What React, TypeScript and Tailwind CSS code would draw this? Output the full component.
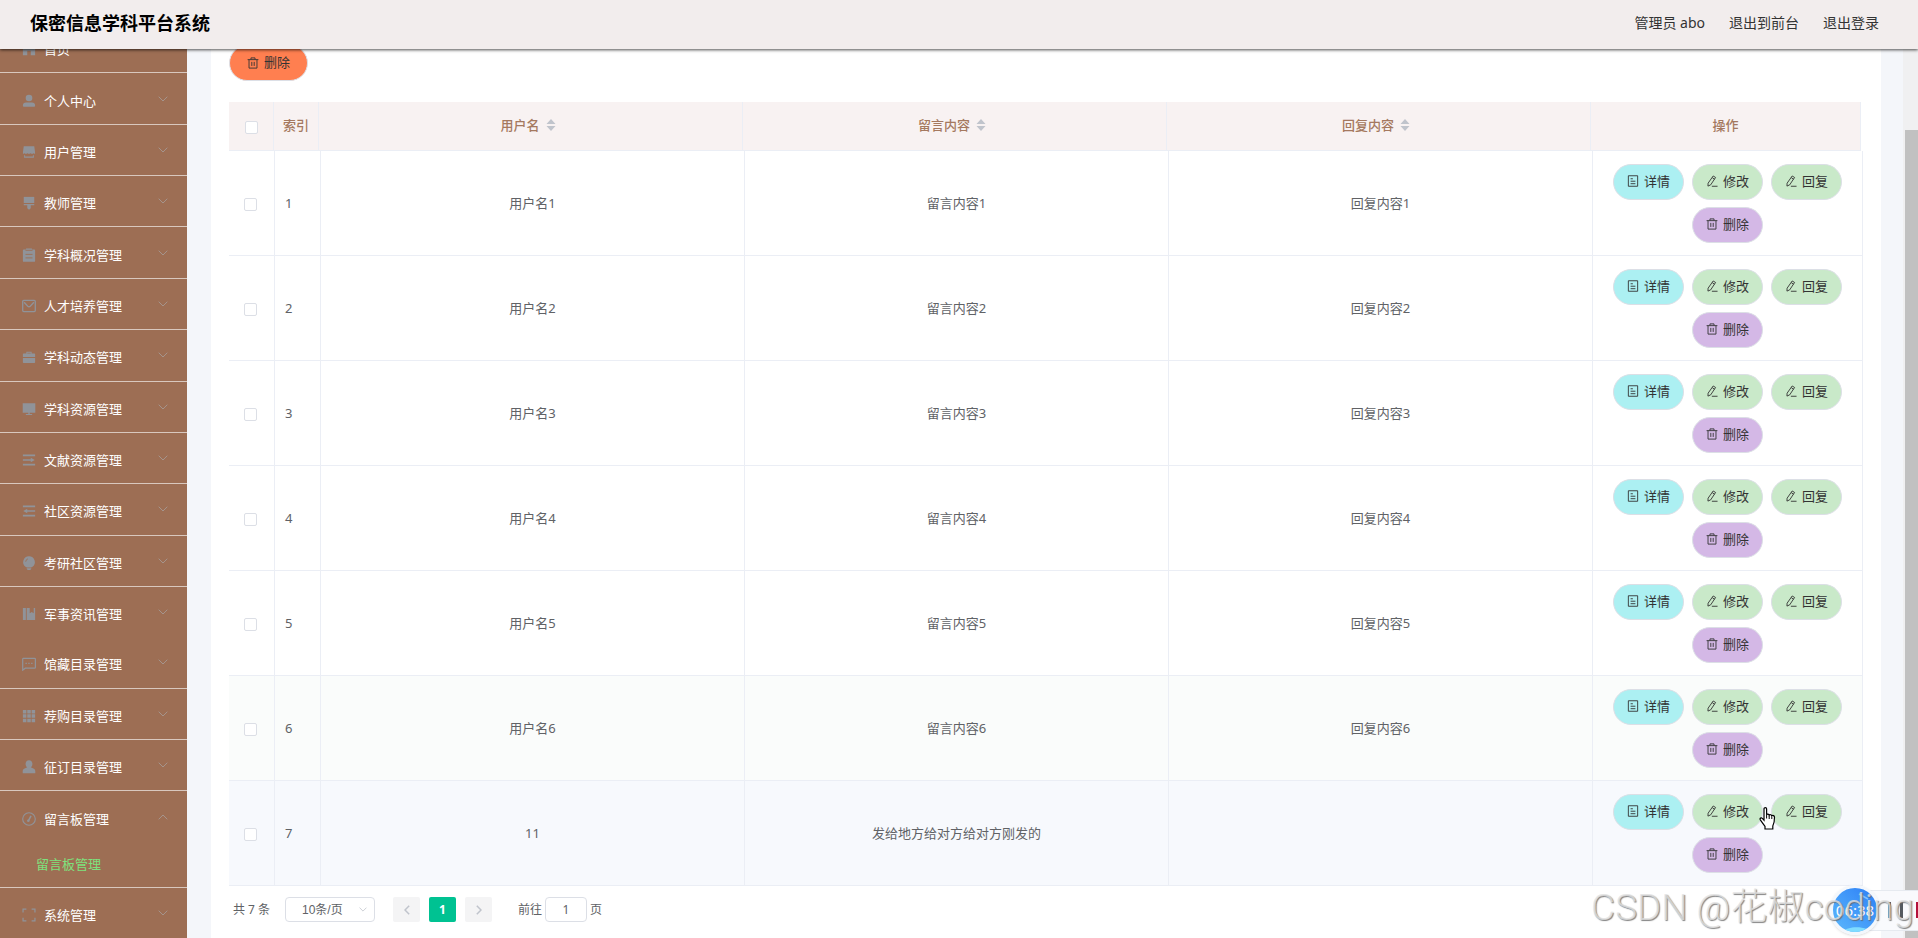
import type { ReactNode } from "react";

const iconPaths: Record<string, ReactNode> = {
  home: (
    <path fill="currentColor" d="M8 1 1 6.6V15h5v-5h4v5h5V6.6z" />
  ),
  person: (
    <g fill="currentColor">
      <circle cx="8" cy="4.6" r="3.8" />
      <path d="M1 13.2c0-2.4 1.3-3.6 3.6-3.6h6.8c2.3 0 3.6 1.2 3.6 3.6 0 .9-.5 1.5-1.4 1.5H2.4c-.9 0-1.4-.6-1.4-1.5z" />
    </g>
  ),
  users: (
    <g fill="currentColor">
      <path d="M2 1.4h12l.9 6.6v2.4l-1.7-.9-1.7.9-1.8-.9-1.7.9-1.7-.9-1.8.9-1.7-.9-1.7.9V8z" />
      <path d="M2.4 11.6h1.2v1.6h8.8v-1.6h1.2v3H2.4z" />
    </g>
  ),
  brush: (
    <g fill="currentColor">
      <path d="M2 1h12v7H2z" />
      <path d="M2 9h12v1.6H10V14l-2 1.6L6 14v-3.4H2z" />
    </g>
  ),
  clipboard: (
    <g>
      <path fill="currentColor" d="M4.6 1.8V.6h6.8v1.2H14c.7 0 1 .4 1 1v12c0 .6-.4 1-1 1H2c-.6 0-1-.4-1-1v-12c0-.6.3-1 1-1z" />
      <path stroke="#9d6e54" d="M4 2.6h8M4 7.3h8M4 11.3h8" />
    </g>
  ),
  mail: (
    <g fill="none" stroke="currentColor" strokeWidth="1.5">
      <rect x=".8" y="1.6" width="14.4" height="12.8" rx="1.2" />
      <path d="M2.4 3.8 6.6 8.2c.9.8 1.9.8 2.8 0l4.2-4.4" />
    </g>
  ),
  briefcase: (
    <g fill="currentColor">
      <path d="M5 4V2h6v2h3.2c.5 0 .8.3.8.8V8H1V4.8c0-.5.3-.8.8-.8zm1.1 0h3.8V3H6.1z" />
      <path d="M1 9h14v5c0 .5-.3.8-.8.8H1.8c-.5 0-.8-.3-.8-.8z" />
    </g>
  ),
  monitor: (
    <path fill="currentColor" d="M.8 1.4h14.4v11H.8zM7.2 12.4h1.6v1.4h2.8v1H4.4v-1h2.8z" />
  ),
  unfold: (
    <path fill="currentColor" d="M1 1.8h14v1.8H1zM1 7.1h9V5.4L14.6 8 10 10.6V8.9H1zM1 12.4h14v1.8H1z" />
  ),
  fold: (
    <path fill="currentColor" d="M1 1.8h14v1.8H1zM15 7.1H6V5.4L1.4 8 6 10.6V8.9h9zM1 12.4h14v1.8H1z" />
  ),
  bulb: (
    <g>
      <path fill="currentColor" d="M8 .4a6.6 6.6 0 0 0-4 11.9l1.7.9h4.6l1.7-.9A6.6 6.6 0 0 0 8 .4zM5.4 14h5.2v.8L9.4 16H6.6l-1.2-1.2z" />
      <path fill="none" stroke="#9d6e54" strokeWidth=".9" d="M4.2 6.6a3.8 3.8 0 0 1 2.6-3.4" />
    </g>
  ),
  book: (
    <path fill="currentColor" d="M1 1.2h3.4v13.6H1zM5.4 1.2h3.4v6l2.3-1.5 2.3 1.5v-6H15v13.600H5.4z" />
  ),
  chat: (
    <g fill="none" stroke="currentColor" strokeWidth="1.4">
      <path d="M1.6 1.6h12.8c.5 0 .9.3.9.9v9.4c0 .6-.4.9-.9.9H3.700L.8 15V2.5c0-.6.3-.9.8-.9z" />
      <path strokeWidth="1.6" d="M4 7.3h1.5M7.2 7.3h1.5M10.5 7.3H12" />
    </g>
  ),
  grid: (
    <path fill="currentColor" d="M1 1h4v4H1zM6 1h4v4H6zM11 1h4v4h-4zM1 6h4v4H1zM6 6h4v4H6zM11 6h4v4h-4zM1 11h4v4H1zM6 11h4v4H6zM11 11h4v4h-4z" />
  ),
  agent: (
    <path fill="currentColor" d="M8 .4c2.4 0 3.9 1.7 3.9 4.1 0 1.7-.7 3.1-1.9 3.9l3.6 1.6c1.100.5 1.6 1.6 1.6 3v2H.8v-2c0-1.4.5-2.5 1.6-3L6 8.4C4.8 7.6 4.1 6.2 4.1 4.5 4.1 2.1 5.6.4 8 .4z" />
  ),
  gauge: (
    <g fill="none" stroke="currentColor" strokeWidth="1.3">
      <circle cx="8" cy="8" r="7.2" />
      <path strokeWidth="1.8" d="M7.3 10.2 10.3 4.5" />
      <circle cx="7.2" cy="10" r=".8" />
    </g>
  ),
  expand: (
    <path fill="none" stroke="currentColor" strokeWidth="1.4" d="M1.2 5V1.2H5M11 1.2h3.8V5M14.8 11v3.8H11M5 14.8H1.2V11" />
  ),
  trash: (
    <path fill="none" stroke="currentColor" strokeWidth="1.2" d="M.8 3.5h14.4M5.3 3.2V1.2h5.4v2M2.7 3.8v11h10.6v-11M6.4 6.5v5.4M9.6 6.5v5.4" />
  ),
  document: (
    <path fill="none" stroke="currentColor" strokeWidth="1.2" d="M1.800 1h12.400v14H1.800zM4.800 5h3M4.800 8.300h6.400M4.800 11.600h6.400" />
  ),
  edit: (
    <path fill="none" stroke="currentColor" strokeWidth="1.2" d="M9.600 1.300 12.800 3.300 6.200 13.200 2.600 14.800 2.800 10.900zM8.300 3.500l3.100 2.100M7.800 15h7.600" />
  ),
};

function Icon({ name, className }: { name: string; className: string }) {
  return (
    <svg viewBox="0 0 16 16" className={className} aria-hidden="true">
      {iconPaths[name]}
    </svg>
  );
}

function Chevron({ className }: { className: string }) {
  return (
    <svg viewBox="0 0 10 6" className={className} fill="none" stroke="currentColor" aria-hidden="true">
      <path d="M.7.7 5 5 9.3.7" />
    </svg>
  );
}

const menu = [
  { icon: "home", label: "首页", leaf: true },
  { icon: "person", label: "个人中心" },
  { icon: "users", label: "用户管理" },
  { icon: "brush", label: "教师管理" },
  { icon: "clipboard", label: "学科概况管理" },
  { icon: "mail", label: "人才培养管理" },
  { icon: "briefcase", label: "学科动态管理" },
  { icon: "monitor", label: "学科资源管理" },
  { icon: "unfold", label: "文献资源管理" },
  { icon: "fold", label: "社区资源管理" },
  { icon: "bulb", label: "考研社区管理" },
  { icon: "book", label: "军事资讯管理", plain: true },
  { icon: "chat", label: "馆藏目录管理" },
  { icon: "grid", label: "荐购目录管理" },
  { icon: "agent", label: "征订目录管理" },
  { icon: "gauge", label: "留言板管理", plain: true, child: "留言板管理" },
  { icon: "expand", label: "系统管理" },
];

function Sidebar() {
  return (
    <aside className="flex w-[187px] shrink-0 flex-col overflow-hidden bg-[#9d6e54]">
      <nav className="-mt-[27px] -mb-px flex grow flex-col text-[13px] text-white">
        {menu.map((item) => (
          <div key={item.label} className="contents">
            <a
              href="#"
              className={
                "flex min-h-12 flex-1 items-center pl-[22px] pr-[19px] pt-1 " +
                (item.plain ? "" : "border-b border-[#d9c8be]")
              }
            >
              <Icon name={item.icon} className="mr-2 size-[14px] text-[#909399]" />
              <span className="grow leading-5">{item.label}</span>
              {!item.leaf && (
                <Chevron
                  className={
                    item.child
                      ? "mb-1 h-[6px] w-[10px] rotate-180 text-[#a5948c]"
                      : "mb-1 h-[6px] w-[10px] text-[#a5948c]"
                  }
                />
              )}
            </a>
            {item.child && (
              <a
                href="#"
                className="flex h-[46px] shrink-0 items-center border-b border-[#d9c8be] pl-9 text-[#7de27d]"
              >
                {item.child}
              </a>
            )}
          </div>
        ))}
      </nav>
    </aside>
  );
}

const rows = [
  { id: 1, user: "用户名1", message: "留言内容1", reply: "回复内容1", tone: "bg-white" },
  { id: 2, user: "用户名2", message: "留言内容2", reply: "回复内容2", tone: "bg-white" },
  { id: 3, user: "用户名3", message: "留言内容3", reply: "回复内容3", tone: "bg-white" },
  { id: 4, user: "用户名4", message: "留言内容4", reply: "回复内容4", tone: "bg-white" },
  { id: 5, user: "用户名5", message: "留言内容5", reply: "回复内容5", tone: "bg-white" },
  { id: 6, user: "用户名6", message: "留言内容6", reply: "回复内容6", tone: "bg-[#fafcfb]" },
  { id: 7, user: "11", message: "发给地方给对方给对方刚发的", reply: "", tone: "bg-[#f7f9fd]" },
];

const actions = [
  { icon: "document", label: "详情", tone: "bg-[#acf0f2]" },
  { icon: "edit", label: "修改", tone: "bg-[#c9e9c9]" },
  { icon: "edit", label: "回复", tone: "bg-[#c9e9c9]" },
  { icon: "trash", label: "删除", tone: "bg-[#d4b8e6]" },
];

function Checkbox({ label }: { label: string }) {
  return (
    <input
      type="checkbox"
      aria-label={label}
      className="mt-[2px] block size-[13px] appearance-none rounded-xs border border-[#dcdfe6] bg-white"
    />
  );
}

function SortableHeading({ children }: { children: ReactNode }) {
  return (
    <th className="border-r border-b border-[#ebeef5] pr-[5px] pb-[2px] font-medium">
      <span className="flex items-center justify-center gap-[6px]">
        {children}
        <svg viewBox="0 0 10 14" className="h-[14px] w-[10px] fill-[#c0c4cc]" aria-hidden="true">
          <path d="M5 1 9.5 6h-9zM5 13 .5 8h9z" />
        </svg>
      </span>
    </th>
  );
}

function MessageTable() {
  return (
    <div className="text-[13px] leading-5">
      <div className="pr-[2px]">
        <table className="w-full table-fixed border-separate border-spacing-0 bg-[#f8f2f2] text-[#a5795f]">
          <colgroup>
            <col className="w-[45px]" />
            <col className="w-[45px]" />
            <col />
            <col />
            <col />
            <col className="w-[270px]" />
          </colgroup>
          <thead>
            <tr className="h-[49px]">
              <th className="border-r border-b border-[#ebeef5] pl-4">
                <Checkbox label="全选" />
              </th>
              <th className="border-r border-b border-[#ebeef5] pb-[2px] pl-[9px] text-left font-medium">索引</th>
              <SortableHeading>用户名</SortableHeading>
              <SortableHeading>留言内容</SortableHeading>
              <SortableHeading>回复内容</SortableHeading>
              <th className="border-r border-b border-[#ebeef5] pb-[2px] font-medium">操作</th>
            </tr>
          </thead>
        </table>
      </div>
      <table className="w-full table-fixed border-separate border-spacing-0 text-center text-[#606266]">
        <colgroup>
          <col className="w-[46px]" />
          <col className="w-[46px]" />
          <col />
          <col />
          <col />
          <col className="w-[270px]" />
        </colgroup>
        <tbody>
          {rows.map((row) => (
            <tr key={row.id} className={row.tone}>
              <td className="border-r border-b border-[#ebeef5] pl-[15px]">
                <Checkbox label={"选择第" + row.id + "行"} />
              </td>
              <td className="border-r border-b border-[#ebeef5] pl-[10px] text-left">{row.id}</td>
              <td className="border-r border-b border-[#ebeef5]">{row.user}</td>
              <td className="border-r border-b border-[#ebeef5]">{row.message}</td>
              <td className="border-r border-b border-[#ebeef5]">{row.reply}</td>
              <td className="border-r border-b border-[#ebeef5] px-2 pt-[13px] pb-3">
                <div className="flex flex-wrap justify-center gap-x-2 gap-y-[7px]">
                  {actions.map((action) => (
                    <button
                      key={action.label}
                      type="button"
                      className={
                        "flex h-9 w-[71px] items-center justify-center gap-[5px] rounded-full border border-[#dcdfe6] pb-[2px] text-[#333333] " +
                        action.tone
                      }
                    >
                      <Icon name={action.icon} className="size-3" />
                      {action.label}
                    </button>
                  ))}
                </div>
              </td>
            </tr>
          ))}
        </tbody>
      </table>
    </div>
  );
}

function Pagination() {
  return (
    <div className="flex items-center pt-[11px] pl-1 text-xs text-[#606266]">
      <span className="w-[52px]">共 7 条</span>
      <div className="relative w-[90px]">
        <select
          aria-label="每页条数"
          className="block h-[25px] w-full appearance-none rounded-sm border border-[#dcdfe6] bg-white pl-4 font-['Liberation_Sans','Noto_Sans_CJK_SC',sans-serif] text-xs"
        >
          <option>10条/页</option>
        </select>
        <Chevron className="pointer-events-none absolute top-[10px] right-2 h-[5px] w-[8px] text-[#c0c4cc]" />
      </div>
      <div className="ml-[18px] flex gap-[9px]">
        <button type="button" aria-label="上一页" className="flex h-[25px] w-[27px] items-center justify-center rounded-xs bg-[#f4f4f5] text-[#c0c4cc]">
          <svg viewBox="0 0 6 10" className="h-[10px] w-[6px]" fill="none" stroke="currentColor" strokeWidth="1.5">
            <path d="M5.2.8 1 5l4.2 4.2" />
          </svg>
        </button>
        <button type="button" className="flex h-[25px] w-[27px] items-center justify-center rounded-xs bg-[#00c292] font-bold text-white">
          1
        </button>
        <button type="button" aria-label="下一页" className="flex h-[25px] w-[27px] items-center justify-center rounded-xs bg-[#f4f4f5] text-[#c0c4cc]">
          <svg viewBox="0 0 6 10" className="h-[10px] w-[6px]" fill="none" stroke="currentColor" strokeWidth="1.5">
            <path d="M.8.8 5 5 .8 9.2" />
          </svg>
        </button>
      </div>
      <label className="ml-[26px] flex items-center gap-[3px]">
        前往
        <input
          type="text"
          defaultValue="1"
          className="h-[25px] w-[42px] rounded-sm border border-[#dcdfe6] bg-white text-center"
        />
        页
      </label>
    </div>
  );
}

function Recorder() {
  return (
    <div className="absolute right-0 bottom-[3px] flex h-[50px] w-[88px] items-center">
      <div className="absolute right-0 flex h-[41px] w-[64px] items-center justify-end gap-[9px] border-y border-[#e6eaf0] bg-[#f9fafd]">
        <span className="h-4 w-[3px] bg-[#555a60]" />
        <span className="h-4 w-[3px] bg-[#555a60]" />
        <span className="ml-1 h-4 w-[2px] bg-[#b3123c]" />
      </div>
      <div className="relative flex size-[50px] items-center justify-center overflow-hidden rounded-full border-[3px] border-[#f3f7fc] bg-linear-to-tr from-[#5db8fb] to-[#2d7df6] text-[15px] text-white shadow">
        <svg viewBox="0 0 44 44" className="absolute inset-0 size-full" fill="none" aria-hidden="true">
          <path d="M9 44c5-5 16-6 25-3l-3 3z" fill="#7fdcff" />
          <path d="m26 6 9 5" stroke="#7fc2ff" strokeWidth="1.5" />
        </svg>
        <span className="relative">06:38</span>
      </div>
    </div>
  );
}

function HandCursor() {
  return (
    <svg viewBox="0 0 17 23" className="absolute top-[807px] right-[142px] h-[23px] w-[17px]" aria-hidden="true">
      <path
        d="M5 1.8c0-1.5 2.6-1.5 2.6 0v6c.4-1 2.4-.8 2.6.4.6-.9 2.4-.5 2.6.6.9-.7 2.7-.2 2.7 1.4 0 4.3-.3 6.3-1.7 8.8v3H6v-2.7C4.3 17 3 15.2 1.3 12.8c-.8-1.5.9-2.5 2-1.4L5 13.2z"
        fill="white"
        stroke="black"
        strokeWidth="1.2"
      />
      <path d="M7.6 7.5v4M10.2 8.5v3.5M12.8 9.5V12" stroke="black" fill="none" />
    </svg>
  );
}

export default function App() {
  return (
    <div className="relative flex h-screen flex-col overflow-hidden bg-[#f4f6fa] font-['Noto_Sans','Noto_Sans_CJK_SC',sans-serif]">
      <header className="relative z-10 flex h-[49px] shrink-0 items-center justify-between bg-[#f2eded] pr-[39px] pb-1 pl-[30px] shadow-[0_1px_3px_rgba(0,0,0,0.7)]">
        <h1 className="text-lg font-bold text-black">保密信息学科平台系统</h1>
        <nav className="flex gap-6 text-sm text-[#333333]">
          <span>管理员 abo</span>
          <a href="#">退出到前台</a>
          <a href="#">退出登录</a>
        </nav>
      </header>
      <div className="flex min-h-0 grow">
        <Sidebar />
        <main className="flex min-w-0 grow flex-col overflow-hidden pr-[22px] pl-6">
          <div className="flow-root shrink-0 grow bg-white px-[18px]">
            <button
              type="button"
              className="-mt-[4px] mb-[21px] flex h-9 w-[79px] items-center justify-center gap-[5px] rounded-full border border-[#dcdfe6] bg-[#ff7f50] pb-px text-[13px] text-[#333333]"
            >
              <Icon name="trash" className="size-3" />
              删除
            </button>
            <MessageTable />
            <Pagination />
          </div>
        </main>
        <div className="flex w-[15px] shrink-0 flex-col bg-[#f0f0f1] pl-[2px]" aria-hidden="true">
          <div className="mt-[81px] grow bg-[#c1c1c1]" />
        </div>
      </div>
      <HandCursor />
      <Recorder />
      <p className="pointer-events-none absolute right-1 bottom-[3px] font-[Roboto,'Noto_Sans_CJK_SC',sans-serif] text-[37px] leading-[54px] font-light whitespace-nowrap text-[#e2e2e2]/80 [text-shadow:1px_1px_1px_rgba(100,100,100,0.8)]">
        CSDN @花椒coding
      </p>
    </div>
  );
}
